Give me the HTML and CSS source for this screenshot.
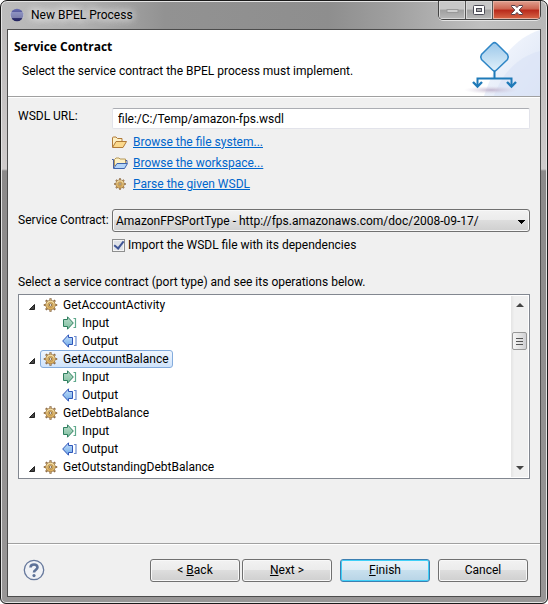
FILE: index.html
```
<!DOCTYPE html>
<html lang="en">
<head>
<meta charset="utf-8">
<title>New BPEL Process</title>
<link rel="stylesheet" href="styles.css">
</head>
<body>
<svg class="defs" aria-hidden="true">
  <defs>
    <linearGradient id="gold" x1="0" y1="0" x2="0" y2="1"><stop offset="0" stop-color="#f8e6b0"/><stop offset="1" stop-color="#d9a850"/></linearGradient>
    <linearGradient id="green" x1="0" y1="0" x2="0" y2="1"><stop offset="0" stop-color="#b9dccb"/><stop offset="1" stop-color="#7fbf9f"/></linearGradient>
    <linearGradient id="blue" x1="0" y1="0" x2="0" y2="1"><stop offset="0" stop-color="#c4e0fa"/><stop offset="1" stop-color="#6fa8e8"/></linearGradient>
    <linearGradient id="orb" x1="0" y1="0" x2="0" y2="1"><stop offset="0" stop-color="#6a70b4"/><stop offset="1" stop-color="#20205c"/></linearGradient>
    <symbol id="gear" viewBox="0 0 14 14">
      <g fill="none" stroke="#8a6844" stroke-width="2.200"><path d="M7 .3v13.400M.3 7h13.400M2.300 2.300l9.400 9.400M11.700 2.300l-9.400 9.400"/></g>
      <g fill="none" stroke="#e0bc78" stroke-width=".8"><path d="M7 1v12M1 7h12M2.800 2.800l8.400 8.400M11.200 2.800l-8.400 8.400"/></g>
      <circle cx="7" cy="7" r="4.800" fill="url(#gold)" stroke="#a07c4c" stroke-width=".8"/>
      <circle cx="7" cy="7" r="2.600" fill="#e8c074" stroke="#b48a48" stroke-width=".8"/><circle cx="7" cy="7" r="1.200" fill="#fff" stroke="#705838" stroke-width=".8"/>
    </symbol>
    <symbol id="input" viewBox="0 0 15 14">
      <path d="M1.500 3.500H5.500V.8L11.300 7 5.500 13.200V10.500H1.500z" fill="url(#green)" stroke="#2f7f5f"/>
      <path d="M11.500 2.500h2v9h-2" fill="none" stroke="#5fa98c" stroke-width="1.200"/>
    </symbol>
    <symbol id="output" viewBox="0 0 15 14">
      <path d="M.7 7 6.500.8V3.500H10.500V10.500H6.500V13.200z" fill="url(#blue)" stroke="#2f55b8"/>
      <path d="M12 2.500h2v9h-2" fill="none" stroke="#6f8fd0" stroke-width="1.200"/>
    </symbol>
    <symbol id="open" viewBox="0 0 6 6"><path d="M5.500.5v5H.5z" fill="#444" stroke="#222"/></symbol>
  </defs>
</svg>
<div class="window">
  <header class="titlebar">
    <svg class="logo" viewBox="0 0 14 14"><circle cx="7" cy="7" r="6.300" fill="url(#orb)"/><path d="M0 5h13.500M0 7h14M0 9h13.500" stroke="#d4d8f0" stroke-width=".9"/></svg>
    <h1>New BPEL Process</h1>
    <div class="captions">
      <button class="min" type="button" aria-label="Minimize"><svg width="13" height="7" viewBox="0 0 13 7"><rect x="1" y="2.500" width="11" height="3" fill="#d0d0d0" stroke="#999"/></svg></button>
      <button class="max" type="button" aria-label="Maximize"><svg width="12" height="10" viewBox="0 0 12 10"><rect x=".5" y=".5" width="11" height="9" rx="1" fill="#fff" stroke="#4a4a55"/><rect x="3.500" y="3.500" width="5" height="3" fill="#aaa" stroke="#4a4a55"/></svg></button>
      <button class="close" type="button" aria-label="Close"><svg width="12" height="10" viewBox="0 0 12 10"><path d="M.5.5h3.600L6 2.600 7.900.5h3.600v1L8.200 5l3.300 3.500v1H7.900L6 7.400 4.100 9.500H.5v-1L3.800 5 .5 1.500z" fill="#fff" stroke="#55404a"/></svg></button>
    </div>
  </header>
  <main class="client">
    <section class="banner">
      <div class="words">
        <h2>Service Contract</h2>
        <p>Select the service contract the BPEL process must implement.</p>
      </div>
      <svg class="art" viewBox="0 0 76 66">
        <defs>
          <linearGradient id="dia" x1="0" y1="0" x2="0" y2="1"><stop offset="0" stop-color="#9cc8ea"/><stop offset="1" stop-color="#e0f0fa"/></linearGradient>
          <radialGradient id="shade"><stop offset="0" stop-color="#b8a8c4" stop-opacity=".8"/><stop offset="1" stop-color="#d8d0e0" stop-opacity="0"/></radialGradient>
          <linearGradient id="curve" x1="0" y1="0" x2="1" y2="1"><stop offset="0" stop-color="#f9fbff"/><stop offset="1" stop-color="#dbe4f5"/></linearGradient>
        </defs>
        <path d="M76 0C50 8 30 34 20 66H76z" fill="url(#curve)"/>
        <path d="M76 21C56 26 38 42 30 66H76z" fill="#dbe4f6" opacity=".7"/>
        <ellipse cx="27" cy="60" rx="27" ry="4" fill="url(#shade)"/>
        <path d="M28.500 13.500Q30.500 11.800 32.500 13.500L43.500 24.500Q45 27 43.500 29.500L32.500 40Q30.500 42 28.500 40L17.500 29.500Q16 27 17.500 24.500z" fill="url(#dia)" stroke="#2f86c6" stroke-width="1.500"/>
        <path d="M30.500 41v7M13.500 56V48.500h34V56" fill="none" stroke="#1f7ab8" stroke-width="2"/>
        <path d="M9 52l4.500 4.500L18 52M43 52l4.500 4.500L52 52" fill="none" stroke="#1f7ab8" stroke-width="2.400"/>
      </svg>
    </section>
    <form class="body">
      <div class="fields">
        <label for="url">WSDL URL:</label>
        <input id="url" type="text" value="file:/C:/Temp/amazon-fps.wsdl">
        <ul class="links">
          <li><svg viewBox="0 0 16 14"><path d="M.5 12V3q0-1 1-1H4l1.500 1.500H10v3" fill="#fdf0c4" stroke="#b07a38"/><path d="M.5 12.500L4 6.500h10.500L11 12.500z" fill="#fbd98c" stroke="#b07a38"/></svg><a href="#files">Browse the file system...</a></li>
          <li><svg viewBox="0 0 16 14"><path d="M2.500 10V3.500L4 2h3l1 1h5.500v4" fill="#fdf0c4" stroke="#b59758"/><path d="M0 3.500h1.500V12M13.500 4.500H15V7" fill="none" stroke="#4a5f98"/><path d="M1.500 12.500L5 7.500h10.500L12.500 12.500z" fill="#b4d4f8" stroke="#3e64ac"/></svg><a href="#workspace">Browse the workspace...</a></li>
          <li><svg class="small" viewBox="0 0 14 14"><use href="#gear"/></svg><a href="#parse">Parse the given WSDL</a></li>
        </ul>
        <label for="contract">Service Contract:</label>
        <select id="contract"><option>AmazonFPSPortType - http://fps.amazonaws.com/doc/2008-09-17/</option></select>
        <label class="check"><input type="checkbox" checked>Import the WSDL file with its dependencies</label>
      </div>
      <p class="hint">Select a service contract (port type) and see its operations below.</p>
      <div class="tree">
        <ul class="rows">
          <li class="op"><svg class="tw"><use href="#open"/></svg><span><svg><use href="#gear"/></svg>GetAccountActivity</span></li>
          <li class="leaf"><svg><use href="#input"/></svg>Input</li>
          <li class="leaf"><svg><use href="#output"/></svg>Output</li>
          <li class="op selected"><svg class="tw"><use href="#open"/></svg><span><svg><use href="#gear"/></svg>GetAccountBalance</span></li>
          <li class="leaf"><svg><use href="#input"/></svg>Input</li>
          <li class="leaf"><svg><use href="#output"/></svg>Output</li>
          <li class="op"><svg class="tw"><use href="#open"/></svg><span><svg><use href="#gear"/></svg>GetDebtBalance</span></li>
          <li class="leaf"><svg><use href="#input"/></svg>Input</li>
          <li class="leaf"><svg><use href="#output"/></svg>Output</li>
          <li class="op"><svg class="tw"><use href="#open"/></svg><span><svg><use href="#gear"/></svg>GetOutstandingDebtBalance</span></li>
        </ul>
        <div class="scroll" aria-hidden="true">
          <svg class="arrow" viewBox="0 0 8 4"><path d="M0 4L4 0l4 4z" fill="#444"/></svg>
          <div class="thumb"></div>
          <svg class="arrow end" viewBox="0 0 8 4"><path d="M0 0h8L4 4z" fill="#444"/></svg>
        </div>
      </div>
    </form>
    <footer class="actions">
      <button class="help" type="button" aria-label="Help"><svg viewBox="0 0 22 22"><circle cx="11" cy="11" r="9.700" fill="#f0f2f6" stroke="#66789c" stroke-width="1.300"/><path d="M7.500 8.500Q7.700 5.500 11 5.500T14.500 8.300Q14.500 10 12.600 11 11 12 11 13.500" fill="none" stroke="#5e7298" stroke-width="2.600"/><circle cx="11" cy="16.600" r="1.600" fill="#5e7298"/></svg></button>
      <button class="push" type="button">&lt; <u>B</u>ack</button>
      <button class="push" type="button"><u>N</u>ext &gt;</button>
      <button class="push primary" type="button"><u>F</u>inish</button>
      <button class="push" type="button">Cancel</button>
    </footer>
  </main>
</div>
</body>
</html>
```
FILE: styles.css
```
* { box-sizing: border-box; }

body {
  margin: 0;
  background: #fff;
  color: #000;
  font: 12px/16px Roboto, "Open Sans", sans-serif;
}

h1, h2, p, ul { margin: 0; padding: 0; font: inherit; }
ul { list-style: none; }
svg { flex: none; }
button, input, select { font: inherit; color: inherit; }
.defs { position: absolute; width: 0; height: 0; }

.window {
  display: flex;
  flex-direction: column;
  min-height: 100vh;
  padding: 0 6px 6px;
  border: 1px solid #1a1a1a;
  border-radius: 7px 7px 6px 6px;
  background:
    linear-gradient(90deg, #bcbcbc, #b0b0b0 15%, #929292 30%, #8e8e8e 60%, #a0a0a0 72%, #c0c0c0 88%, #b8b8b8) top / 100% 28px no-repeat,
    linear-gradient(#b8b6b6 0, #cfcbcb 168px, #8c8a8a 170px, #989696 100%);
  box-shadow: inset 0 0 0 1px #e4e4e4;
}

.titlebar {
  display: flex;
  align-items: center;
  height: 28px;
  margin: 0 -5px;
  padding: 0 5px 0 8px;
  gap: 7px;
}
.logo { width: 14px; height: 14px; }
.titlebar h1 { flex: 1; text-shadow: 0 0 8px #fff, 0 0 8px #fff; }
.captions {
  display: flex;
  align-self: flex-start;
  height: 19px;
  border: 1px solid #444;
  border-top: 0;
  border-radius: 0 0 5px 5px;
  box-shadow: 0 1px #e4e4e4;
  overflow: hidden;
}
.captions button {
  display: flex;
  align-items: center;
  justify-content: center;
  width: 27px;
  padding: 0;
  border: 0;
  border-right: 1px solid #555;
  background: linear-gradient(#c8c8c8 45%, #a0a0a0 50%, #b8b8b8);
  box-shadow: inset 0 0 0 1px #d8d8d8;
}
.captions .close {
  width: 47px;
  border: 0;
  background: linear-gradient(#e0a090, #cc6450 45%, #b8281a 50%, #d86848);
  box-shadow: inset 0 0 0 1px #e8b0a0;
}

.client {
  display: flex;
  flex: 1;
  flex-direction: column;
  border: 1px solid #4c4c4c;
  background: #f0f0f0;
}

.banner {
  display: flex;
  justify-content: space-between;
  height: 67px;
  border-bottom: 1px solid #a0a0a0;
  background: #fff;
}
.words { padding: 9px 6px; }
.words h2 { font-family: "Open Sans", sans-serif; font-weight: 700; }
.words p { padding: 8px 8px 0; }
.art { width: 76px; height: 66px; }

.body { flex: 1; padding: 10px 10px 0; border-top: 1px solid #fff; }
.fields {
  display: grid;
  grid-template-columns: 94px 1fr;
}
#url {
  width: 100%;
  height: 21px;
  padding: 0 5px;
  border: 1px solid #e2e3ea;
  border-top-color: #abadb3;
  border-radius: 2px;
  background: #fff;
}
.links { grid-column: 2; padding: 2px 0 15px; }
.links li { display: flex; align-items: center; gap: 5px; height: 21px; }
.links svg { width: 16px; height: 14px; }
.links .small { height: 12px; }
.links a { color: #0066cc; }

#contract {
  appearance: none;
  width: 100%;
  height: 23px;
  padding: 0 24px 0 3px;
  border: 1px solid #707070;
  border-radius: 3px;
  background:
    linear-gradient(#000, #000) right 4px top 10px / 7px 1px no-repeat,
    linear-gradient(#000, #000) right 5px top 11px / 5px 1px no-repeat,
    linear-gradient(#000, #000) right 6px top 12px / 3px 1px no-repeat,
    linear-gradient(#000, #000) right 7px top 13px / 1px 1px no-repeat,
    linear-gradient(#f2f2f2, #ebebeb 49%, #dddddd 50%, #cfcfcf);
  box-shadow: inset 0 0 0 1px #f8f8f8;
}
.fields label[for="contract"] { padding-top: 3px; }
.check {
  display: flex;
  grid-column: 2;
  align-items: center;
  gap: 3px;
  margin-top: 5px;
}
.check input {
  display: grid;
  place-items: center;
  appearance: none;
  width: 13px;
  height: 13px;
  margin: 0;
  border: 1px solid #8e8f8f;
  background: #dfe2e8;
  box-shadow: inset 0 0 0 1px #f4f4f4;
}
.check input::before {
  content: "";
  width: 4px;
  height: 8px;
  margin-top: -2px;
  border: solid #3f5596;
  border-width: 0 2px 2px 0;
  transform: rotate(38deg);
}
.hint { margin-top: 21px; }

.tree {
  display: flex;
  margin-top: 4px;
  border: 1px solid #828790;
  background: #fff;
}
.rows { flex: 1; padding: 1px 0 2px 9px; }
.rows li { display: flex; align-items: center; height: 18px; }
.rows svg { width: 15px; height: 14px; }
.rows .tw { width: 6px; height: 6px; margin: 4px 5px 0 1px; }
.op span {
  display: flex;
  align-items: center;
  gap: 5px;
  height: 18px;
  padding: 0 3px 0 2px;
  border: 1px solid transparent;
  border-radius: 3px;
}
.op.selected span {
  border-color: #84acdd;
  background: linear-gradient(#f0f6fe, #cfe3fb);
}
.leaf { gap: 5px; padding-left: 34px; }

.scroll {
  display: flex;
  flex-direction: column;
  align-items: center;
  width: 17px;
  margin: 1px 1px 1px 0;
  background: linear-gradient(90deg, #e4e4e4, #f0f0f0 20%, #f0f0f0);
}
.arrow { width: 8px; height: 4px; margin-top: 7px; }
.arrow.end { margin: auto 0 7px; }
.thumb {
  width: 15px;
  height: 18px;
  margin-top: 25px;
  border: 1px solid #979797;
  border-radius: 2px;
  background:
    repeating-linear-gradient(#555 0 1px, transparent 1px 3px) center / 7px 7px no-repeat,
    linear-gradient(90deg, #f5f5f5, #e4e4e4 50%, #cfcfd3);
}

.actions {
  display: flex;
  gap: 8px;
  align-items: center;
  height: 53px;
  padding: 0 12px 0 15px;
  border-top: 1px solid #a0a0a0;
  box-shadow: inset 0 1px #fff;
}
.help {
  width: 22px;
  height: 22px;
  margin-right: auto;
  padding: 0;
  border: 0;
  background: none;
}
.help svg { display: block; }
.push {
  width: 90px;
  height: 23px;
  padding: 0;
  border: 1px solid #707070;
  border-radius: 3px;
  background: linear-gradient(#f2f2f2, #ebebeb 49%, #dddddd 50%, #cfcfcf);
  box-shadow: inset 0 0 0 1px #f8f8f8;
}
.push:nth-child(2) { margin-right: -6px; }
.push.primary {
  border-color: #3c7fb1;
  background: linear-gradient(#eaf3f9, #dcecf5 49%, #c8e0ee 50%, #b8d4e6);
  box-shadow: inset 0 0 0 1px #3fd0f8;
}
```
